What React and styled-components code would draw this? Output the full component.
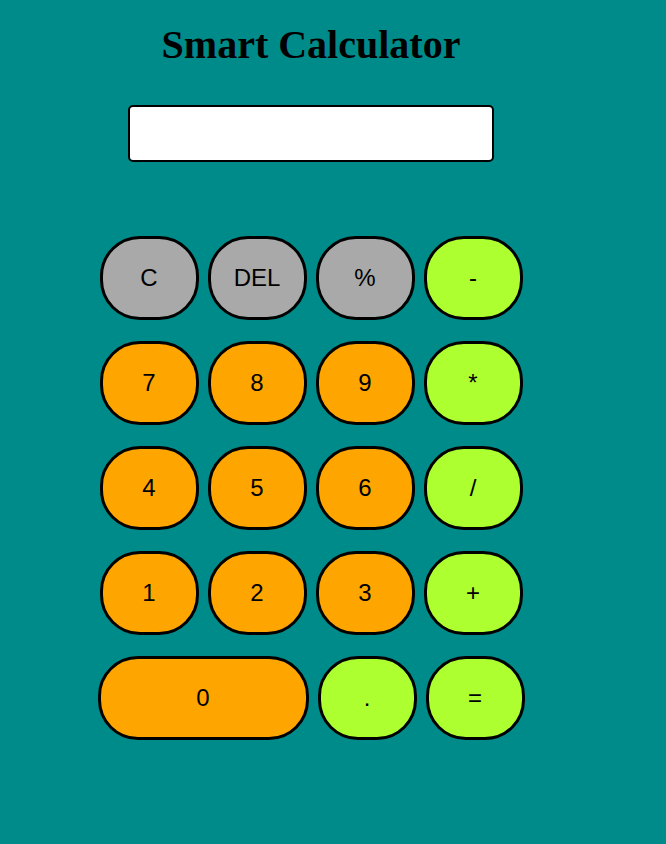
import React from "react";
import styled, { createGlobalStyle } from "styled-components";

const GlobalStyle = createGlobalStyle`
  html, body {
    margin: 0;
    padding: 0;
    background-color: #008b8b;
  }
  body {
    min-height: 844px;
  }
`;

const Page = styled.div`
  width: 622px;
  padding-top: 23px;
  display: flex;
  flex-direction: column;
  align-items: center;
`;

const Title = styled.h1`
  margin: 0;
  font-family: "Liberation Serif", "Times New Roman", serif;
  font-size: 40px;
  line-height: 44px;
  font-weight: bold;
  color: #000;
`;

const Display = styled.input`
  box-sizing: border-box;
  width: 366px;
  height: 57px;
  margin-top: 38px;
  border: 2px solid #000;
  border-radius: 5px;
  background: #fff;
  font-family: "Liberation Sans", Arial, sans-serif;
  font-size: 24px;
  padding: 0 10px;
  outline: none;
`;

const Keypad = styled.div`
  margin-top: 74px;
  display: flex;
  flex-direction: column;
  align-items: center;
  gap: 21px;
`;

const Row = styled.div`
  display: flex;
  justify-content: center;
  gap: 9px;
`;

const colors = {
  gray: "#a9a9a9",
  orange: "#ffa500",
  green: "#adff2f",
};

const Key = styled.button`
  box-sizing: border-box;
  width: ${(p) => (p.$wide ? "211px" : "99px")};
  height: 84px;
  border: 3px solid #000;
  border-radius: 40px;
  background-color: ${(p) => colors[p.$kind]};
  color: #000;
  font-family: "Liberation Sans", Arial, sans-serif;
  font-size: 24px;
  padding: 0;
  cursor: pointer;
`;

const rows = [
  [["C", "gray"], ["DEL", "gray"], ["%", "gray"], ["-", "green"]],
  [["7", "orange"], ["8", "orange"], ["9", "orange"], ["*", "green"]],
  [["4", "orange"], ["5", "orange"], ["6", "orange"], ["/", "green"]],
  [["1", "orange"], ["2", "orange"], ["3", "orange"], ["+", "green"]],
  [["0", "orange", true], [".", "green"], ["=", "green"]],
];

export default function App() {
  return (
    <>
      <GlobalStyle />
      <Page>
        <Title>Smart Calculator</Title>
        <Display type="text" readOnly />
        <Keypad>
          {rows.map((row, i) => (
            <Row key={i}>
              {row.map(([label, kind, wide]) => (
                <Key key={label} $kind={kind} $wide={wide}>
                  {label}
                </Key>
              ))}
            </Row>
          ))}
        </Keypad>
      </Page>
    </>
  );
}
